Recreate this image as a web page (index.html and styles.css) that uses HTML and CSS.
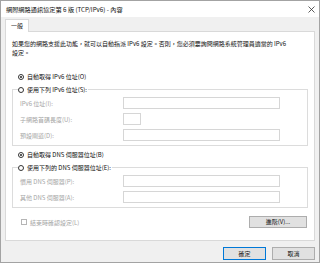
FILE: index.html
```html
<!DOCTYPE html>
<html lang="zh-Hant">
<head>
    <meta charset="UTF-8">
    <meta name="viewport" content="width=device-width, initial-scale=1.0">
    <title>IPv6 內容</title>
    <link rel="stylesheet" href="styles.css">
</head>
<body>
    <div class="window">
        <div class="titlebar">
            <span class="title">網際網路通訊協定第 6 版 (TCP/IPv6) - 內容</span>
            <svg class="close" width="7" height="7" viewBox="0 0 7 7">
                <path d="M0.5 0.5 L6.5 6.5 M6.5 0.5 L0.5 6.5" stroke="#333" stroke-width="0.8" fill="none"/>
            </svg>
        </div>
        <div class="body">
            <div class="tabs">
                <span class="tab">一般</span>
            </div>
            <div class="panel">
                <p class="desc"><span class="line">如果您的網路支援此功能，就可以自動指派 IPv6 設定。否則，您必須要詢問網路系統管理員適當的 IPv6</span><br>設定。</p>

                <div class="radio top ip"><span class="dot checked"></span>自動取得 IPv6 位址(O)</div>
                <fieldset class="group">
                    <legend><span class="radio"><span class="dot"></span>使用下列 IPv6 位址(S):</span></legend>
                    <div class="field"><span class="label">IPv6 位址(I):</span><input class="input" disabled></div>
                    <div class="field"><span class="label">子網路首碼長度(U):</span><input class="input short" disabled></div>
                    <div class="field"><span class="label">預設閘道(D):</span><input class="input" disabled></div>
                </fieldset>

                <div class="radio top dns"><span class="dot checked"></span>自動取得 DNS 伺服器位址(B)</div>
                <fieldset class="group">
                    <legend><span class="radio"><span class="dot"></span>使用下列的 DNS 伺服器位址(E):</span></legend>
                    <div class="field"><span class="label">慣用 DNS 伺服器(P):</span><input class="input" disabled></div>
                    <div class="field"><span class="label">其他 DNS 伺服器(A):</span><input class="input" disabled></div>
                </fieldset>

                <div class="options">
                    <span class="check"><span class="box"></span>結束時確認設定(L)</span>
                    <button class="btn advanced">進階(V)...</button>
                </div>
            </div>
            <div class="actions">
                <button class="btn default">確定</button>
                <button class="btn">取消</button>
            </div>
        </div>
    </div>
</body>
</html>
```

FILE: styles.css
```css
body {
    margin: 0;
    font-family: "Noto Sans CJK TC", "Noto Sans", sans-serif;
    font-size: 6px;
    color: #111;
}
.window {
    width: 320px;
    height: 263px;
    box-sizing: border-box;
    border: 1px solid #a3a3a3;
    background: #f0f0f0;
}
.titlebar {
    height: 16px;
    background: #fff;
    display: flex;
    align-items: center;
    justify-content: space-between;
    padding: 0 4px 0 5px;
}
.title {
    font-size: 6.2px;
    color: #111;
}
.close {
    display: block;
}
.body {
    padding: 2px 4px 0 4px;
}
.tabs {
    display: flex;
    height: 13px;
}
.tab {
    position: relative;
    width: 24px;
    height: 13px;
    box-sizing: border-box;
    background: #fff;
    border: 1px solid #d9d9d9;
    border-bottom: none;
    padding-left: 5px;
    line-height: 12px;
}
.panel {
    height: 210px;
    box-sizing: border-box;
    margin-top: -1px;
    background: #fff;
    border: 1px solid #d9d9d9;
    padding: 7px 6px 0 6px;
}
.desc {
    margin: 0;
    line-height: 9px;
}
.desc .line {
    white-space: nowrap;
}
.radio {
    display: flex;
    align-items: center;
    height: 11px;
}
.radio.top {
    margin: 0 0 2px 6px;
}
.radio.ip {
    margin-top: 14px;
}
.radio.dns {
    margin-top: 3px;
}
.dot {
    width: 6px;
    height: 6px;
    box-sizing: border-box;
    border: 1px solid #333;
    border-radius: 50%;
    margin-right: 3px;
    position: relative;
}
.dot.checked::after {
    content: "";
    position: absolute;
    left: 1px;
    top: 1px;
    width: 2px;
    height: 2px;
    border-radius: 50%;
    background: #222;
}
.group {
    margin: 0;
    min-width: 0;
    border: 1px solid #dcdcdc;
    padding: 2px 0 4px 7px;
}
.group legend {
    margin-left: -2px;
    padding: 0 1px 0 0;
}
.field {
    display: flex;
    align-items: center;
    height: 12px;
    margin-bottom: 4px;
}
.field:last-child {
    margin-bottom: 0;
}
.label {
    width: 103px;
    color: #a6a6a6;
}
.input {
    width: 157px;
    height: 12px;
    box-sizing: border-box;
    margin: 0;
    padding: 0;
    border: 1px solid #d6d6d6;
    background: #fff;
}
.input.short {
    width: 18px;
}
.options {
    display: flex;
    align-items: center;
    justify-content: space-between;
    margin: 8px 1px 0 9px;
}
.check {
    display: flex;
    align-items: center;
    color: #a6a6a6;
}
.box {
    width: 6px;
    height: 6px;
    box-sizing: border-box;
    border: 1px solid #b5b5b5;
    margin-right: 3px;
}
.btn {
    font-family: inherit;
    font-size: 6px;
    color: #111;
    background: #e1e1e1;
    border: 1px solid #adadad;
    height: 12px;
    padding: 0;
    line-height: 10px;
}
.advanced {
    width: 58px;
}
.actions {
    display: flex;
    justify-content: flex-end;
    gap: 6px;
    margin-top: 6px;
}
.actions .btn {
    width: 43px;
    height: 13px;
}
.btn.default {
    border-color: #0078d7;
}
```
